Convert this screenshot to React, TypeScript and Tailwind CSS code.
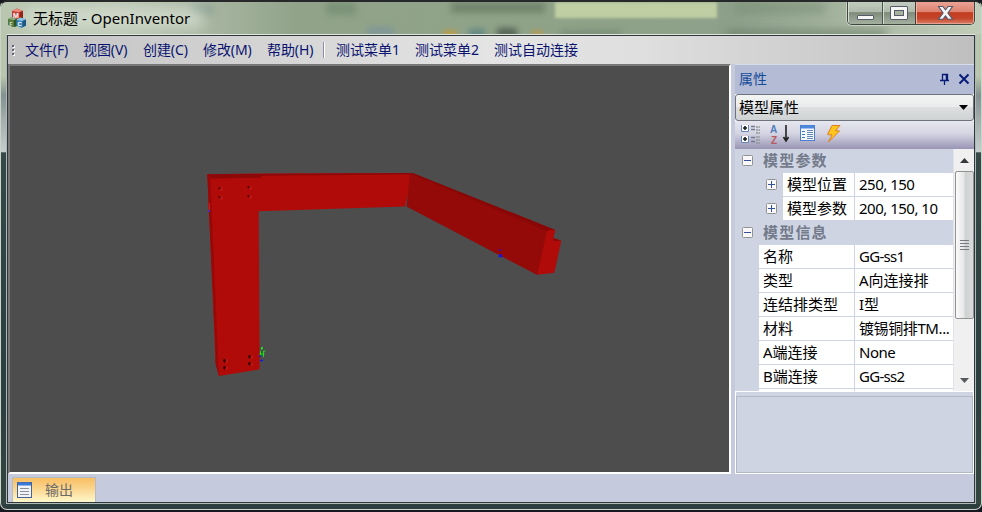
import React from "react";

const menus = [
  { label: "文件(F)", w: "w-[58px]" },
  { label: "视图(V)", w: "w-[60px]" },
  { label: "创建(C)", w: "w-[60px]" },
  { label: "修改(M)", w: "w-[64px]" },
  { label: "帮助(H)", w: "w-[57px]" },
];
const extraMenus = [
  { label: "测试菜单1", w: "w-[79px]" },
  { label: "测试菜单2", w: "w-[79px]" },
  { label: "测试自动连接", w: "w-[100px]" },
];

function MfcLogo() {
  return (
    <svg width="19" height="20" viewBox="0 0 19 20">
      <path d="M4 3l5-2.5L15 3v7l-5 2-6-2z" fill="#c23a30" />
      <path d="M4 3l5-2.5L15 3l-4 1.3z" fill="#e88a7c" />
      <path d="M11.5 4.2L15 3v7l-3.5 1.5z" fill="#93241d" />
      <path d="M0 11l4-2 5 2v7l-4 1-5-2z" fill="#55793f" />
      <path d="M0 11l4-2 5 2-3 1z" fill="#93ac7c" />
      <path d="M6 12l3-1v7l-3 1z" fill="#2f5524" />
      <path d="M8.500 11.500l4-2 5.500 2v6l-4.500 2.500-5-2.500z" fill="#3d87ba" />
      <path d="M8.500 11.500l4-2 5.500 2-4.500 1.500z" fill="#8cc4e2" />
      <path d="M14.500 13l3.500-1.500v6L14.500 19.300z" fill="#1d5682" />
      <g fill="#fff" fontFamily="Liberation Sans, sans-serif" fontWeight="bold">
        <text x="5" y="10" fontSize="7">M</text>
        <text x="1.500" y="17.500" fontSize="5" fill="#dce6d3">F</text>
        <text x="9.500" y="18" fontSize="6">C</text>
      </g>
    </svg>
  );
}

const glassButton = "shadow-[inset_1px_0_#d5ddd1] bg-[linear-gradient(#c2cbbf_0%,#aeb9ab_46%,#7e8b7b_48%,#a5b09f_100%)]";

function CaptionButtons() {
  return (
    <div className="mr-[6px] flex h-[23px] w-[128px] overflow-hidden rounded-b-[5px] border border-t-0 border-[#3d4740] shadow-[0_0_0_1px_#c9d2c4]">
      <div className={"flex w-[35px] items-end justify-center border-r border-[#4b564e] pb-[4px] " + glassButton}>
        <div className="h-[5px] w-[17px] rounded-[1px] border border-[#555b68] bg-[#f5f5f3]" />
      </div>
      <div className={"flex w-[33px] items-center justify-center border-r border-[#4b3d38] " + glassButton}>
        <div className="flex h-[14px] w-[18px] items-center justify-center rounded-[1px] border border-[#555b68] bg-[#f5f5f3]">
          <div className="h-[6px] w-[10px] border border-[#555b68] bg-[#a6b09f]" />
        </div>
      </div>
      <div className="flex flex-1 items-center justify-center bg-[linear-gradient(#e9a294_0%,#dc8270_46%,#c23c1f_48%,#c4462a_75%,#dd8069_100%)] shadow-[inset_1px_0_#efb3a6,inset_-1px_-1px_#e6a090]">
        <svg width="17" height="16" viewBox="0 0 17 16">
          <path d="M1.500 1.500h4.400l2.600 3.400 2.600-3.400h4.400L10.900 8l4.600 6.300h-4.400l-2.600-3.500-2.600 3.500H1.500L6.100 8z" fill="#f5f5f5" stroke="#525769" strokeWidth="1.1" />
        </svg>
      </div>
    </div>
  );
}

function TitleBar() {
  return (
    <div className="relative h-[32px] shrink-0 overflow-hidden bg-[linear-gradient(90deg,#b9c6b0_0%,#bdc8b6_12%,#a6b49f_22%,#91a48a_30%,#8fa388_55%,#8da08a_75%,#aab8a3_88%,#c2cdb9_100%)]">
      <div className="absolute left-[554px] top-0 h-[16px] w-[162px] bg-[#bfcea3] blur-[1.5px]" />
      <div className="absolute left-[450px] top-0 h-[11px] w-[94px] bg-[#667962]/70 blur-[3px]" />
      <div className="absolute left-[190px] top-[3px] h-[10px] w-[22px] bg-[#728e86]/60 blur-[4px]" />
      <div className="absolute left-[325px] top-0 h-[13px] w-[30px] bg-[#778e74]/80 blur-[3px]" />
      <div className="absolute left-[366px] top-[25px] h-[9px] w-[26px] bg-[#768da2]/60 blur-[3px]" />
      <div className="absolute left-[442px] top-[28px] h-[8px] w-[14px] bg-[#c59a34]/70 blur-[2px]" />
      <div className="absolute left-[468px] top-[27px] h-[9px] w-[16px] bg-[#557e83]/80 blur-[3px]" />
      <div className="absolute left-[496px] top-[26px] h-[10px] w-[20px] bg-[#475448]/80 blur-[3px]" />
      <div className="absolute left-[530px] top-[28px] h-[8px] w-[12px] bg-[#bb9951]/70 blur-[2px]" />
      <div className="absolute left-[560px] top-[28px] h-[8px] w-[60px] bg-[#708471]/60 blur-[3px]" />
      <div className="absolute left-[734px] top-[1px] h-[10px] w-[90px] bg-[#778c73]/60 blur-[5px]" />
      <div className="absolute left-[725px] top-[28px] h-[9px] w-[160px] bg-[#687e68]/70 blur-[4px]" />
      <div className="absolute left-[24px] top-[6px] h-[20px] w-[178px] bg-[#d5ddcf]/80 blur-[7px]" />
      <div className="absolute inset-x-0 top-[-1px] h-px bg-white" />
      <div className="relative flex h-full items-start">
        <div className="ml-[7px] mt-[6px]"><MfcLogo /></div>
        <div className="ml-[6px] mt-[4px] flex text-[15px] leading-[24px] text-black">
          <span className="w-[45px]">无标题</span>
          <span className="ml-[4px] whitespace-nowrap text-[15px] tracking-[0.03px]">- OpenInventor</span>
        </div>
        <div className="ml-auto"><CaptionButtons /></div>
      </div>
    </div>
  );
}

function MenuBar() {
  return (
    <div className="flex h-[28px] shrink-0 items-center bg-[linear-gradient(90deg,#c2c2c2_0%,#e4e4e4_50%,#dfdfdf_65%,#bfbfbf_100%)] text-[14px] leading-[28px] text-[#09136f]">
      <div className="ml-[4px] flex w-[13px] shrink-0 flex-col gap-[2px]">
        {[0, 1, 2].map((i) => (
          <i key={i} className="size-[2px] bg-[#64647c] shadow-[1px_1px_#fff]" />
        ))}
      </div>
      {menus.map((m) => (
        <span key={m.label} className={"whitespace-nowrap tracking-[-0.1px] " + m.w}>{m.label}</span>
      ))}
      <div className="-ml-[1px] mr-[11px] h-[16px] w-[2px] border-l border-r border-l-[#8a8da5] border-r-white" />
      {extraMenus.map((m) => (
        <span key={m.label} className={"whitespace-nowrap " + m.w}>{m.label}</span>
      ))}
    </div>
  );
}

function Hole({ x, y, dark }: { x: number; y: number; dark?: boolean }) {
  return (
    <g>
      <ellipse cx={x + 1} cy={y} rx="2.4" ry="2" fill="#c01412" />
      <path d={`M${x - 2} ${y - 1}q2-2 3 0l-1 ${dark ? 3 : 2}q-2-1-2-${dark ? 3 : 2}`} fill="#3a0505" opacity={dark ? 1 : 0.7} />
    </g>
  );
}

function Viewport() {
  return (
    <div className="h-[410px] w-[723px] shrink-0 border-2 border-b-white border-l-[#777] border-r-white border-t-[#777] bg-[#4d4d4d]">
      <svg width="719" height="406" viewBox="10 66 719 406">
        <path d="M207.300 174.300L259 173.500l154-.5-8 33.500L258.700 211.300 259.700 369.300 219 376 215.500 362z" fill="#b00b09" />
        <path d="M207.300 174.300L412 173l-1 1.500-149 1.300-2 2-50 .6z" fill="#8d0808" />
        <path d="M207.300 174.300l3 4L219 376l-3.500-12v-17z" fill="#970909" />
        <path d="M410 173.200l3 0L555.300 230 551 235 537.300 275 406.500 206.500z" fill="#940a08" />
        <path d="M410 173.200h3.300L555.300 230l-8.300 1z" fill="#870807" />
        <path d="M547 230.500l8.300-.7-1.800 8.300 7.800 2.700-7 32-17 2z" fill="#b00b09" />
        <path d="M553.500 238.100l7.800 2.700-7.800.4z" fill="#8c0808" />
        <Hole x={220} y={189} /><Hole x={220} y={198} />
        <Hole x={249} y={188} /><Hole x={249} y={197} />
        <Hole x={225} y={361} dark /><Hole x={225} y={368} dark />
        <Hole x={250} y={357} dark /><Hole x={250} y={364} dark />
        <path d="M209.500 203v8" stroke="#f10a08" />
        <path d="M209 210v2" stroke="#472aba" strokeWidth="2" />
        <path d="M261.500 347v3m-1 1v5m2-9v2m1 2v6m-4-3h5m-1-3h2" stroke="#16df16" strokeWidth="1" fill="none" />
        <path d="M260 355v2m0 3.500h3" stroke="#1715e2" strokeWidth="1.5" />
        <path d="M499 250h2m-2 5h3m-3.500 1.500h4" stroke="#1916dc" strokeWidth="1.4" />
      </svg>
    </div>
  );
}

function Expander({ plus }: { plus?: boolean }) {
  return (
    <svg width="11" height="11" viewBox="0 0 11 11" className="shrink-0">
      <rect x=".5" y=".5" width="10" height="10" rx="1" fill="#f9f9f9" stroke="#929292" />
      <path d={plus ? "M2 5.5h7M5.5 2v7" : "M2 5.5h7"} stroke="#344f96" />
    </svg>
  );
}

function Category({ label }: { label: string }) {
  return (
    <div className="flex h-[24px] shrink-0 items-center bg-[#ced4e2] pb-[1px] pl-[7px]">
      <Expander />
      <span className="ml-[10px] text-[15px] font-bold leading-[23px] tracking-[1.2px] text-[#737a8a]">{label}</span>
    </div>
  );
}

function Row({ label, value, nested, trim }: { label: string; value: string; nested?: boolean; trim?: string }) {
  return (
    <div className="flex h-[24px] shrink-0 text-[15px] leading-[22px] text-black">
      <div className={nested ? "flex w-[48px] items-center justify-end pb-[1px] pr-[6px]" : "w-[24px]"}>
        {nested && <Expander plus />}
      </div>
      <div className={"whitespace-nowrap border-b border-r border-[#ced4e2] bg-white pl-[4px] " + (nested ? "w-[72px]" : "w-[96px]")}>{label}</div>
      <div className={"flex-1 whitespace-nowrap border-b border-[#ced4e2] bg-white pl-[4px] " + (trim || "")}>{value}</div>
    </div>
  );
}

function PanelToolbar() {
  return (
    <div className="flex h-[28px] shrink-0 items-start bg-[linear-gradient(#e6e7ef_0%,#d5d4e2_45%,#9894b4_100%)] pl-[6px] pt-[4px]">
      <svg width="100" height="20" viewBox="0 0 100 20">
        {[0, 11].map((y) => (
          <g key={y}>
            <path d={`M.5 ${y}v6.500h7V${y}`} fill="#fff" stroke="#6486bb" />
            <path d={`M2 ${y + 3}h4M4 ${y + 1}v4`} stroke="#161a24" strokeWidth="1.6" />
          </g>
        ))}
        <path d="M10 1.500h4M10 4.500h4M10 12.500h4M10 16.500h4" stroke="#74778c" strokeWidth="1.4" />
        <path d="M15 2h4M15 5h4M15 8h4M15 12h4M15 15h4M15 18h4" stroke="#8f9b98" strokeWidth="1.300" strokeDasharray="2 .5" />
        <text x="29" y="7.500" fontFamily="Liberation Sans, sans-serif" fontWeight="bold" fontSize="10" fill="#507db9">A</text>
        <text x="30" y="18.500" fontFamily="Liberation Sans, sans-serif" fontWeight="bold" fontSize="10" fill="#b85a5f">Z</text>
        <path d="M45 0v15m-2.500-3l2.500 4 2.500-4" fill="none" stroke="#222" strokeWidth="1.6" />
        <rect x="59.500" y=".5" width="14" height="15" fill="#f3f8fe" stroke="#4a7dcd" />
        <path d="M60 2h13" stroke="#4d88df" strokeWidth="3" />
        <path d="M61 6.500h3M61 9.500h3M61 12.500h3" stroke="#3c78c0" />
        <path d="M66 5.500h6M66 7.500h6M66 9.500h6M66 11.500h6M66 13.500h6" stroke="#6389ba" />
        <path d="M91 .5h8l-4.500 5 4 .5L87.500 17l3.500-7-4.500-.5z" fill="#ffc51c" stroke="#df7f20" />
      </svg>
    </div>
  );
}

function ScrollBar() {
  return (
    <div className="flex h-[242px] w-[20px] shrink-0 flex-col items-center bg-[#f0f0f0]">
      <div className="flex h-[22px] items-center">
        <svg width="9" height="5" viewBox="0 0 9 5"><path d="M0 5l4.500-5L9 5z" fill="#36393b" /></svg>
      </div>
      <div className="flex h-[148px] w-[19px] flex-col items-center justify-center gap-[2px] rounded-[2px] border border-[#929292] bg-[linear-gradient(90deg,#fbfbfb,#e7e7e8_45%,#d0d1d3_55%,#d9dadc)]">
        {[0, 1, 2, 3].map((i) => <i key={i} className="h-px w-[9px] bg-[#777b80]" />)}
      </div>
      <div className="mt-auto flex h-[22px] items-center">
        <svg width="9" height="5" viewBox="0 0 9 5"><path d="M0 0h9L4.500 5z" fill="#55595c" /></svg>
      </div>
    </div>
  );
}

function Properties() {
  return (
    <div className="flex h-[410px] w-[239px] shrink-0 flex-col border-t border-[#d8dcea] bg-white">
      <div className="flex h-[29px] shrink-0 items-center bg-[#b3bcd4] pb-[2px] pl-[4px] text-[14px] leading-[27px] text-[#164b99]">
        属性
        <svg width="32" height="12" viewBox="0 0 32 12" className="ml-auto mr-[2px]">
          <path d="M2.500 7V1.500h5V7M0 7.500h9M4.500 8v4" fill="none" stroke="#071b78" strokeWidth="1.300" />
          <path d="M6.500 1v6" stroke="#071b78" strokeWidth="1.5" />
          <path d="M19.500 1.500l9 9m0-9l-9 9" stroke="#071b78" strokeWidth="2" />
        </svg>
      </div>
      <div className="flex h-[27px] shrink-0 items-center rounded-[3px] border border-[#6d727b] bg-[linear-gradient(#f2f3f3_0%,#eaecec_48%,#dcdedf_50%,#cfd2d2_100%)] pl-[3px] text-[15px] leading-[25px]">
        模型属性
        <svg width="9" height="5" viewBox="0 0 9 5" className="ml-auto mr-[5px]"><path d="M0 0h9L4.500 5z" fill="#000" /></svg>
      </div>
      <PanelToolbar />
      <div className="flex h-[242px] shrink-0 bg-[#ced4e2]">
        <div className="flex w-[218px] shrink-0 flex-col overflow-hidden">
          <Category label="模型参数" />
          <Row nested label="模型位置" value="250, 150" trim="tracking-[-0.5px]" />
          <Row nested label="模型参数" value="200, 150, 10" trim="tracking-[-0.5px]" />
          <Category label="模型信息" />
          <Row label="名称" value="GG-ss1" trim="tracking-[-0.7px]" />
          <Row label="类型" value="A向连接排" />
          <Row label="连结排类型" value="I型" />
          <Row label="材料" value="镀锡铜排TM..." trim="tracking-[-0.4px]" />
          <Row label="A端连接" value="None" trim="tracking-[-0.5px]" />
          <Row label="B端连接" value="GG-ss2" trim="tracking-[-0.7px]" />
          <Row label="" value="" />
        </div>
        <div className="w-px shrink-0 bg-[#e1e4eb]" />
        <ScrollBar />
      </div>
      <div className="mx-px mb-px mt-px flex-1 bg-[#ced4e2] pt-[4px]">
        <div className="h-full border border-[#afb9c8] bg-[#ced4e2]" />
      </div>
    </div>
  );
}

const sideGlass = "w-[5px] shrink-0 bg-[linear-gradient(#b9c6ae_0%,#b9c6ae_9%,#849190_13%,#a1acab_18%,#c6cdcd_25%,#344948_25.3%,#2b3e40_75%,#344640_100%)]";

export default function App() {
  return (
    <div className="h-[512px] w-[982px] overflow-hidden bg-[#171820] font-['Noto_Sans','Noto_Sans_CJK_SC',sans-serif]">
      <div className="flex h-[510px] flex-col overflow-hidden rounded-[7px] border border-t-2 border-[#cad4c8] border-t-[#26282a] bg-[#2d3e3f]">
        <TitleBar />
        <div className="flex h-[470px] shrink-0">
          <div className={sideGlass} />
          <div className="flex w-[970px] shrink-0 flex-col border border-[#aebab6] border-t-[#e1e7df] bg-[#c5cbdc]">
            <div className="flex h-[468px] flex-col border border-[#303639]">
              <MenuBar />
              <div className="flex h-[410px] shrink-0 justify-between">
                <Viewport />
                <Properties />
              </div>
              <div className="flex h-[28px] shrink-0 items-end pl-[4px]">
                <div className="flex h-[25px] w-[84px] items-center border border-b-0 border-[#b3bbc4] bg-[linear-gradient(#f8be62,#fbd58f_45%,#fff8cb)] pl-[4px] text-[14px] text-[#6d6b69]">
                  <svg width="15" height="16" viewBox="0 0 15 16">
                    <rect x=".5" y=".5" width="14" height="15" fill="#f1f4f7" stroke="#49638f" />
                    <path d="M1 2h13" stroke="#3c78d7" strokeWidth="3" />
                    <path d="M3 6.500h9M3 9.500h9M3 12.500h9" stroke="#8b8f99" />
                  </svg>
                  <span className="ml-[13px] leading-[24px]">输出</span>
                </div>
              </div>
            </div>
          </div>
          <div className={sideGlass} />
        </div>
      </div>
    </div>
  );
}
